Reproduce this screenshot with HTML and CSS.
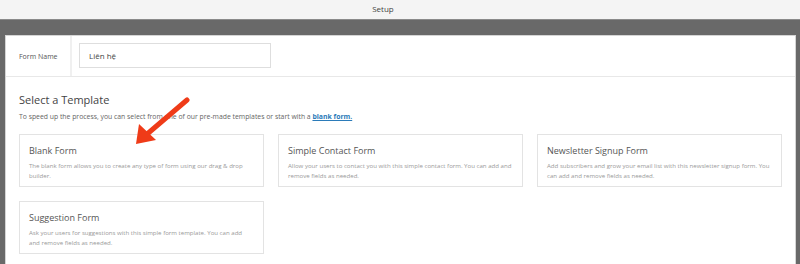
FILE: index.html
```html
<!DOCTYPE html>
<html>
<head>
    <title>Setup</title>
    <link rel="stylesheet" href="styles.css">
</head>
<body>
    <div class="topbar">Setup</div>
    <div class="frame">
        <div class="panel">
            <div class="name-row">
                <label class="name-label" for="formName">Form Name</label>
                <div class="name-field">
                    <input type="text" id="formName" value="Liên hệ">
                </div>
            </div>
            <div class="templates">
                <h2>Select a Template</h2>
                <p class="intro">To speed up the process, you can select from one of our pre-made templates or start with a <a href="#">blank form.</a></p>
                <div class="template-grid">
                    <div class="template-card">
                        <h3>Blank Form</h3>
                        <p>The blank form allows you to create any type of form using our drag &amp; drop builder.</p>
                    </div>
                    <div class="template-card">
                        <h3>Simple Contact Form</h3>
                        <p>Allow your users to contact you with this simple contact form. You can add and remove fields as needed.</p>
                    </div>
                    <div class="template-card">
                        <h3>Newsletter Signup Form</h3>
                        <p>Add subscribers and grow your email list with this newsletter signup form. You can add and remove fields as needed.</p>
                    </div>
                    <div class="template-card">
                        <h3>Suggestion Form</h3>
                        <p>Ask your users for suggestions with this simple form template. You can add and remove fields as needed.</p>
                    </div>
                </div>
                <!-- annotation arrow over the intro text -->
                <svg class="arrow" width="60" height="52" viewBox="0 0 60 52">
                    <line x1="55" y1="3" x2="14" y2="38" stroke="#ef3b18" stroke-width="5" stroke-linecap="round"/>
                    <polygon points="4,47 7,27 24,43" fill="#ef3b18"/>
                </svg>
            </div>
        </div>
    </div>
</body>
</html>
```

FILE: styles.css
```css
body {
    margin: 0;
    font-family: "Open Sans", "Noto Sans", sans-serif;
    background-color: #696969;
    height: 264px;
    overflow: hidden;
}
.topbar {
    height: 19px;
    line-height: 17px;
    background-color: #f4f4f4;
    border-bottom: 1px solid #8a8a8a;
    color: #444;
    font-size: 8px;
    text-align: center;
    padding-right: 34px;
}
.frame {
    padding: 15px 4px 0 5px;
}
.panel {
    background-color: #fff;
    border: 1px solid #d5d5d5;
    border-bottom: none;
    height: 240px;
}
.name-row {
    display: flex;
    height: 40px;
    border-bottom: 1px solid #e8e8e8;
}
.name-label {
    width: 51px;
    padding-left: 13px;
    border-right: 2px solid #f0f0f0;
    display: flex;
    align-items: center;
    font-size: 7px;
    color: #555;
}
.name-field {
    display: flex;
    align-items: center;
    padding-left: 7px;
}
.name-field input {
    width: 192px;
    height: 25px;
    box-sizing: border-box;
    border: 1px solid #dedede;
    padding: 0 9px;
    font-family: inherit;
    font-size: 8px;
    color: #444;
    margin-bottom: 1px;
}
.templates {
    position: relative;
    padding: 15px 13px 0;
}
.templates h2 {
    margin: 0;
    font-size: 11px;
    font-weight: normal;
    color: #444;
    line-height: 16px;
}
.intro {
    margin: 3px 0 0;
    font-size: 6.85px;
    line-height: 12px;
    color: #666;
}
.intro a {
    color: #2b7bb9;
    font-weight: bold;
}
.template-grid {
    display: grid;
    grid-template-columns: repeat(3, 1fr);
    gap: 14px;
    margin-top: 11px;
}
.template-card {
    border: 1px solid #e3e3e3;
    height: 53px;
    box-sizing: border-box;
    padding: 9px 9px 0;
}
.template-card h3 {
    margin: 0;
    font-size: 9px;
    font-weight: normal;
    color: #555;
    line-height: 14px;
}
.template-card p {
    margin: 3px 0 0;
    font-size: 6.1px;
    line-height: 10px;
    color: #999;
}
.arrow {
    position: absolute;
    left: 126px;
    top: 20px;
}
```
